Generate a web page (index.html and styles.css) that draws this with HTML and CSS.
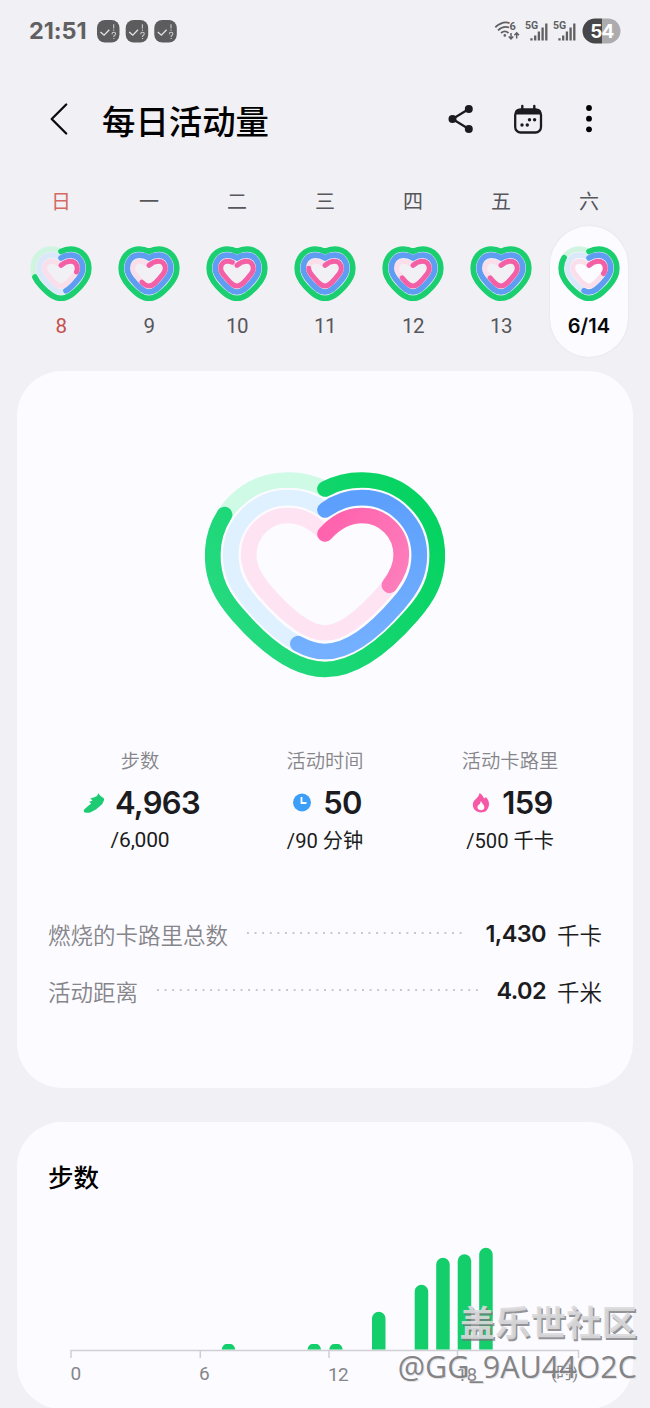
FILE: index.html
```html
<!DOCTYPE html>
<html lang="zh-CN">
<head>
<meta charset="utf-8">
<title>每日活动量</title>
<link rel="stylesheet" href="styles.css">
</head>
<body>
<svg class="defs" width="0" height="0">
  <defs>
    <path id="g" pathLength="100" d="M31 6.5C34 4.900 37.500 4 41 4C51 4 58.800 12.500 58.800 23.500C58.800 31 55.500 36 50.500 41.300C43.500 48.800 38 53.300 31 53.300C24 53.300 18.500 48.800 11.500 41.300C6.500 36 3.200 31 3.200 23.500C3.200 12.500 11 4 21 4C24.500 4 28 4.900 31 6.500"/>
    <path id="b" pathLength="100" d="M31 13C34 11 37 10.100 41 10.100C48 10.100 52.800 16 52.800 23.300C52.800 29 49.800 32.800 45.500 37.300C40.500 42.800 36.500 47 31 47C25.500 47 21.500 42.800 16.500 37.300C12.200 32.800 9.200 29 9.200 23.300C9.200 16 14 10.100 21 10.100C25 10.100 28 11 31 13"/>
    <path id="p" pathLength="100" d="M31 20.300C34 17.600 37 16.200 40.500 16.200C44.800 16.200 47.300 19.500 47.300 23.500C47.300 27.300 44.600 29.800 42 32.700C38.500 36.800 35.300 41 31 41C26.700 41 23.500 36.800 20 32.700C17.400 29.800 14.700 27.300 14.700 23.500C14.700 19.500 17.200 16.200 21.500 16.200C25 16.200 28 17.600 31 20.300"/>
    <g id="tracks"><use href="#g" class="gt"/><use href="#b" class="bt"/><use href="#p" class="pt"/></g>
    <g id="note">
      <rect width="22.5" height="22.5" rx="8" fill="#5c5c5e"/>
      <path d="M3.5 12l3.6 3.2 5.2-5.4" fill="none" stroke="#e4e4e8" stroke-width="1.3"/>
      <path d="M16.7 4.3v4.2M16.7 9.6v1.2M15 14.2q0-1.9 1.8-1.9t1.7 1.6q0 1-1.6 2v1M16.9 17.9v1" fill="none" stroke="#c9c9cd" stroke-width="1.1"/>
    </g>
    <g id="sig">
      <text x="0" y="8" class="five">5G</text>
      <path d="M6.5 19.500v-2.200M10.2 19.500v-5M13.9 19.500v-9M17.6 19.500v-13M21.3 19.500v-17" stroke="#606063" stroke-width="2.3"/>
    </g>
  </defs>
</svg>
<div class="screen">
  <div class="status">
    <span class="clock">21:51</span>
    <svg width="80" height="23"><use href="#note"/><use href="#note" x="28.7"/><use href="#note" x="57.3"/></svg>
    <svg class="signals" width="127" height="26">
      <g fill="none" stroke="#606063" stroke-width="1.8">
        <path d="M1.3 9.2Q9 2.6 15.5 5.1M4 12.3Q9 7.4 15 9.4M7 15Q10.8 11.8 14.5 15"/>
        <path d="M17 15v5.5M14.7 18.4l2.3 2.4 2.3-2.4M22.7 20.5V15M20.4 17.2l2.3-2.4 2.3 2.4" stroke-width="1.5"/>
      </g>
      <circle cx="10.8" cy="17.4" r="1.3" fill="#606063"/>
      <text x="15.5" y="12" class="six">6</text>
      <use href="#sig" x="31" y="3"/><use href="#sig" x="59" y="3"/>
      <clipPath id="pill"><rect x="88.5" y=".5" width="38" height="25" rx="12.5"/></clipPath>
      <g clip-path="url(#pill)"><path d="M88 0h20v26H88z" fill="#474749"/><path d="M108 0h20v26h-20z" fill="#acacaf"/></g>
      <text x="96.2" y="19.6" class="batt">54</text>
    </svg>
  </div>

  <header class="head">
    <svg width="20" height="34" fill="none" stroke="#0b0b0d" stroke-width="2.3" stroke-linecap="round" stroke-linejoin="round"><path d="M16.2 2.5L1.7 17l14.5 14.5"/></svg>
    <h1>每日活动量</h1>
    <svg class="share" width="28" height="30"><path d="M20.800 5L4.500 15l16.300 10" fill="none" stroke="#1b1b20" stroke-width="2.3"/><g fill="#1b1b20"><circle cx="4.500" cy="15" r="4"/><circle cx="20.800" cy="5" r="4"/><circle cx="20.800" cy="25" r="4"/></g></svg>
    <svg class="cal" width="30" height="31"><rect x="2.200" y="5.500" width="25.800" height="23" rx="5.500" fill="none" stroke="#1b1b20" stroke-width="2.300"/><path d="M2 10.500V9q0-4 4-4h18.200q4 0 4 4v1.500z" fill="#1b1b20"/><path d="M9.300 2v4M21.300 2v4" stroke="#1b1b20" stroke-width="2.400" stroke-linecap="round"/><g fill="#1b1b20"><circle cx="9" cy="21" r="1.700"/><circle cx="14.300" cy="21" r="1.700"/><circle cx="16.500" cy="15.800" r="1.700"/><circle cx="21.600" cy="15.800" r="1.700"/></g></svg>
    <svg class="more" width="8" height="30"><circle cx="4" cy="4" r="2.900"/><circle cx="4" cy="14.700" r="2.900"/><circle cx="4" cy="25.300" r="2.900"/></svg>
  </header>

  <div class="week">
    <div class="day sun"><span class="wd">日</span><div class="pillbox"><svg class="mini" viewBox="0 0 62 58"><use href="#tracks"/><use href="#g" class="gr" stroke-dasharray="71 100"/><use href="#b" class="br" stroke-dasharray="46 100"/><use href="#p" class="pr" stroke-dasharray="27 100"/></svg><b>8</b></div></div>
    <div class="day"><span class="wd">一</span><div class="pillbox"><svg class="mini" viewBox="0 0 62 58"><use href="#tracks"/><use href="#g" class="gr"/><use href="#b" class="br"/><use href="#p" class="pr" stroke-dasharray="59 100"/></svg><b>9</b></div></div>
    <div class="day"><span class="wd">二</span><div class="pillbox"><svg class="mini" viewBox="0 0 62 58"><use href="#tracks"/><use href="#g" class="gr"/><use href="#b" class="br"/><use href="#p" class="pr" stroke-dasharray="94 100"/></svg><b>10</b></div></div>
    <div class="day"><span class="wd">三</span><div class="pillbox"><svg class="mini" viewBox="0 0 62 58"><use href="#tracks"/><use href="#g" class="gr"/><use href="#b" class="br"/><use href="#p" class="pr" stroke-dasharray="77 100"/></svg><b>11</b></div></div>
    <div class="day"><span class="wd">四</span><div class="pillbox"><svg class="mini" viewBox="0 0 62 58"><use href="#tracks"/><use href="#g" class="gr"/><use href="#b" class="br"/><use href="#p" class="pr" stroke-dasharray="65 100"/></svg><b>12</b></div></div>
    <div class="day"><span class="wd">五</span><div class="pillbox"><svg class="mini" viewBox="0 0 62 58"><use href="#tracks"/><use href="#g" class="gr"/><use href="#b" class="br"/><use href="#p" class="pr" stroke-dasharray="65 100"/></svg><b>13</b></div></div>
    <div class="day today"><span class="wd">六</span><div class="pillbox"><svg class="mini" viewBox="0 0 62 58"><use href="#tracks"/><use href="#g" class="gr" stroke-dasharray="83 100"/><use href="#b" class="br" stroke-dasharray="54 100"/><use href="#p" class="pr" stroke-dasharray="29 100"/></svg><b>6/14</b></div></div>
  </div>

  <section class="card summary">
    <svg class="heart" viewBox="205 471 240 207" width="240" height="207">
      <defs>
        <path id="G" pathLength="100" d="M325 489C336 483 348 480 362 480C404 480 437.300 514 437.300 555C437.300 580 428 597 412 615C385 646 355 669.500 325 669.500C295 669.500 265 646 238 615C222 597 212.700 580 212.700 555C212.700 514 246 480 288 480C302 480 314 483 325 489"/>
        <path id="B" pathLength="100" d="M325 510C336 502 348 497.700 362 497.700C394 497.700 419.300 524 419.300 555C419.300 574 412 588 398 604C374 632 348 651.500 325 651.500C302 651.500 276 632 252 604C238 588 230.700 574 230.700 555C230.700 524 256 497.700 288 497.700C302 497.700 314 502 325 510"/>
        <path id="P" pathLength="100" d="M325 534C334 524 346 515.500 362 515.500C384 515.500 401.300 533 401.300 555C401.300 569 394 580 385 591C365 614 343 633 325 633C307 633 285 614 265 591C256 580 248.700 569 248.700 555C248.700 533 266 515.500 288 515.500C304 515.500 316 524 325 534"/>
        <linearGradient id="gg" gradientUnits="userSpaceOnUse" x1="430" y1="480" x2="215" y2="600"><stop stop-color="#03d35f"/><stop offset="1" stop-color="#25d97f"/></linearGradient>
        <linearGradient id="bg" gradientUnits="userSpaceOnUse" x1="330" y1="500" x2="340" y2="650"><stop stop-color="#5c9ffc"/><stop offset="1" stop-color="#74b0ff"/></linearGradient>
        <linearGradient id="pg" gradientUnits="userSpaceOnUse" x1="325" y1="530" x2="400" y2="580"><stop stop-color="#ff63ad"/><stop offset="1" stop-color="#fd7dbb"/></linearGradient>
      </defs>
      <g fill="none" stroke-width="15.700" stroke-linecap="round">
        <use href="#G" stroke="#cffae5"/><use href="#B" stroke="#dff0ff"/><use href="#P" stroke="#fee4f3"/>
        <use href="#G" stroke="url(#gg)" stroke-dasharray="82.700 100"/>
        <use href="#B" stroke="url(#bg)" stroke-dasharray="55.200 100"/>
        <use href="#P" stroke="url(#pg)" stroke-dasharray="31.300 100"/>
      </g>
    </svg>
    <div class="metrics">
      <div class="metric"><span class="label">步数</span>
        <div class="val"><svg width="22" height="22"><path d="M15.300 1.300L17.300 3.800 20.700 6.300Q21.500 7 20.900 8.500L19.300 12 13.300 17.200 7.700 20.300Q5 21.200 2 20.600Q0 19.800 1.200 17.500L5.300 13.700 8.300 11.500 6 9.900 9.500 8.500 7.300 6.500 11.300 5.300 14 4Z" fill="#1ccb72"/></svg><strong>4,963</strong></div>
        <span class="goal">/6,000</span></div>
      <div class="metric"><span class="label">活动时间</span>
        <div class="val"><svg width="22" height="22"><circle cx="11" cy="10.500" r="9" fill="#3c9ff7"/><path d="M10.500 5v6h5" fill="none" stroke="#fff" stroke-width="1.800"/></svg><strong>50</strong></div>
        <span class="goal cn">/90 分钟</span></div>
      <div class="metric"><span class="label">活动卡路里</span>
        <div class="val"><svg width="22" height="22"><path d="M9.700 1Q13 3 14.200 6.400Q15.500 5.800 15.800 4.900Q19.400 8.500 19 13Q18 20.500 10.800 20.500Q3.300 20 2.800 13Q2.700 9.500 6.400 6.600Q9 4 9.700 1Z" fill="#f757a7"/><path d="M11 9Q12 11.500 14 13.500Q15.500 17.800 11.200 18.300Q6.500 18 7.700 13.800Q10.500 11.700 11 9Z" fill="#fff"/></svg><strong>159</strong></div>
        <span class="goal cn">/500 千卡</span></div>
    </div>
    <div class="row"><span>燃烧的卡路里总数</span><i></i><strong>1,430</strong><em>千卡</em></div>
    <div class="row second"><span>活动距离</span><i></i><strong>4.02</strong><em>千米</em></div>
  </section>

  <section class="card steps">
    <h2>步数</h2>
    <svg class="chart" viewBox="17 1230 616 178" width="616" height="178">
      <path d="M71 1358v-7.500H578.500V1358M200.300 1350v8M329 1350v8M457.500 1350v8" fill="none" stroke="#cfcfd4" stroke-width="1.500"/>
      <g fill="#13ce6b">
        <path d="M221.700 1349.500q1-5.500 5-5.500h3.500q4 0 5 5.500zM307.500 1349.500q1-5.500 5-5.500h3.500q4 0 5 5.500zM329.200 1349.500q1-5.500 5-5.500h3.500q4 0 5 5.500z"/>
        <path d="M372 1349.500v-31a6.750 6.750 0 0 1 13.500 0v31zM414.700 1349.500v-58a6.750 6.750 0 0 1 13.500 0v58zM436.200 1349.500v-85a6.750 6.750 0 0 1 13.500 0v85zM457.700 1349.500v-88.500a6.750 6.750 0 0 1 13.500 0v88.500zM479.200 1349.500v-95a6.750 6.750 0 0 1 13.500 0v95z"/>
      </g>
      <g class="ticks"><text x="70.500" y="1380">0</text><text x="199" y="1380">6</text><text x="328" y="1380.500">12</text><text x="456.500" y="1380.500">18</text><text x="551" y="1379" class="hour">(时)</text></g>
    </svg>
  </section>
  <div class="mark"><div class="site">盖乐世社区</div><div class="user">@GG_9AU44O2C</div></div>
</div>
</body>
</html>
```
FILE: styles.css
```css
* { box-sizing: border-box; margin: 0; padding: 0; }
body { background: #f1f0f5; font-family: Roboto, "Noto Sans CJK SC", sans-serif; color: #1b1b20; }
.defs { position: absolute; }
svg { display: block; flex: none; }
.screen { position: relative; width: 650px; height: 1408px; overflow: hidden; }

.status { display: flex; align-items: center; height: 62px; padding: 0 29px; }
.clock { width: 68px; font: 700 23.5px/28px Inter, sans-serif; letter-spacing: -.1px; color: #606063; }
.signals { margin-left: auto; }
.five { font: 700 10.5px Roboto, sans-serif; fill: #606063; }
.six { font: 700 11px Roboto, sans-serif; fill: #606063; }
.batt { font: 700 19px Inter, sans-serif; letter-spacing: -.8px; fill: #fff; }

.head { display: flex; align-items: center; height: 114px; padding-left: 50px; }
h1 { width: 346px; margin-left: 32px; margin-top: 2px; font: 500 33.4px/44px "Noto Sans CJK SC", sans-serif; color: #000; }
.cal { margin-left: 37px; }
.more { margin-left: 42px; }

.week { display: grid; grid-template-columns: repeat(7, 88px); padding-left: 17px; height: 195px; padding-top: 10px; }
.day { display: flex; flex-direction: column; align-items: center; }
.wd { font: 400 20px/30px "Noto Sans CJK SC", sans-serif; color: #56565b; height: 40px; }
.pillbox { width: 78px; height: 131px; padding-top: 19px; display: flex; flex-direction: column; align-items: center; border-radius: 39px; }
.mini { width: 62px; height: 58px; fill: none; stroke-width: 5.6px; stroke-linecap: round; }
.pillbox b { margin-top: 10px; font: 400 20.5px/26px Roboto, sans-serif; letter-spacing: -.6px; color: #56565b; }
.sun .wd { color: #d46a62; }
.sun b { color: #c4504d; }
.today .pillbox { background: #fcfbff; box-shadow: 0 0 2px #dddce3; }
.today b { font: 600 20px/26px Inter, sans-serif; letter-spacing: .1px; color: #08080a; }
.gt { stroke: #cff5e0; }
.bt { stroke: #dbe8fa; }
.pt { stroke: #fadfeb; stroke-width: 5px; }
.gr { stroke: #1bcf70; }
.br { stroke: #5f9df2; }
.pr { stroke: #f460a5; stroke-width: 5px; }

.card { width: 616px; margin-left: 17px; background: #fcfbff; border-radius: 45px; }
.summary { height: 717px; padding-top: 100px; }
.heart { margin-left: 188px; }
.metrics { display: grid; grid-template-columns: repeat(3, 185px); padding-left: 30.500px; margin-top: 67px; }
.metric { display: flex; flex-direction: column; align-items: center; }
.label { font: 350 19.300px/30px "Noto Sans CJK SC", sans-serif; color: #85858a; }
.val { display: flex; align-items: center; gap: 10px; height: 38px; margin: 9px 0 0 3px; }
.val strong { font: 600 31px/38px Inter, sans-serif; letter-spacing: -.7px; }
.goal { font: 400 21px/30px Roboto, "Noto Sans CJK SC", sans-serif; letter-spacing: -.2px; margin-top: 3px; }
.goal.cn { font-size: 20.200px; letter-spacing: 0; margin-top: 4px; }
.row { display: flex; align-items: center; height: 57px; padding: 0 31px; margin-top: 49px; }
.row.second { margin-top: 0; }
.row span { font: 350 22.500px/32px "Noto Sans CJK SC", sans-serif; color: #85858a; }
.row i { flex: 1; height: 2px; margin: 0 19px 2px 19px; background: radial-gradient(circle at 1px 1px, #c6c6cb 1px, transparent 1.400px) 0 0 / 7.600px 2px repeat-x; }
.row strong { font: 600 23.500px/30px Inter, sans-serif; letter-spacing: -.6px; }
.row em { font: normal 350 22.500px/32px "Noto Sans CJK SC", sans-serif; margin-left: 11px; }

.steps { height: 287px; margin-top: 34px; padding-top: 34px; }
h2 { margin-left: 31px; font: 500 25.500px/40px "Noto Sans CJK SC", sans-serif; color: #000; }
.chart { margin-top: 34px; }
.ticks { font: 400 19px Roboto, sans-serif; letter-spacing: -.8px; fill: #86868b; }
.hour { font-family: Roboto, "Noto Sans CJK SC", sans-serif; font-size: 17px; }

.mark { position: absolute; right: 13px; top: 1299px; text-align: right; white-space: nowrap; }
.site { font: 700 35.500px/44px "Noto Sans CJK SC", sans-serif; color: rgba(218, 218, 220, .92); text-shadow: 1.500px 1.500px 0 #77777acc; }
.user { font: 400 30.500px/46px "Open Sans", sans-serif; color: #727275dd; text-shadow: 1px 1px 0 #e0e0e2; }
```
